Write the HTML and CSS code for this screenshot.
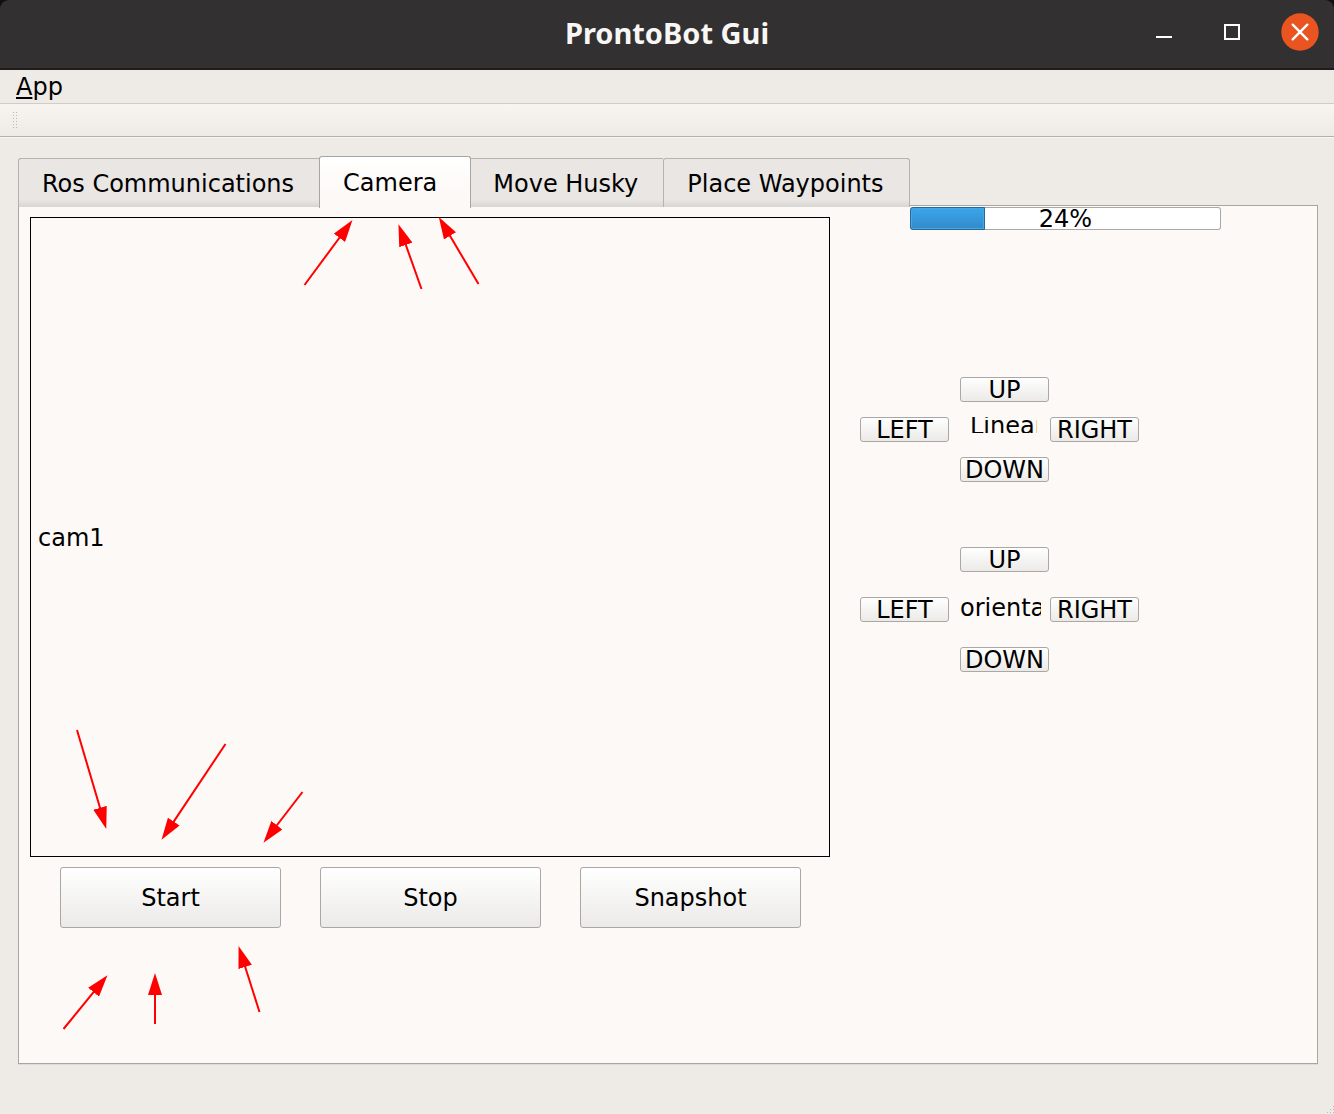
FILE: index.html
```
<!DOCTYPE html>
<html lang="en">
<head>
<meta charset="utf-8">
<title>ProntoBot Gui</title>
<link rel="stylesheet" href="styles.css">
</head>
<body>
<header class="titlebar">
  <h1 class="title">ProntoBot Gui</h1>
  <div class="window-controls">
    <button class="window-button" type="button" aria-label="Minimize"><svg width="38" height="38" viewBox="0 0 38 38"><path d="M11 24h16" stroke="#fff" stroke-width="2"/></svg></button>
    <button class="window-button" type="button" aria-label="Maximize"><svg width="38" height="38" viewBox="0 0 38 38"><rect x="12" y="12" width="14" height="14" fill="none" stroke="#fff" stroke-width="2"/></svg></button>
    <button class="window-button" type="button" aria-label="Close"><svg width="38" height="38" viewBox="0 0 38 38"><circle cx="19" cy="19" r="18.7" fill="#e95420"/><path d="M11.700 11.700l14.600 14.600M26.300 11.700L11.700 26.300" stroke="#fff" stroke-width="2.400" stroke-linecap="round"/></svg></button>
  </div>
</header>
<nav class="menubar"><button class="menu-item" type="button"><span class="mnemonic">A</span>pp</button></nav>
<div class="toolbar"><svg width="5" height="17" viewBox="0 0 5 17" aria-hidden="true"><path d="M.5 0v17M3.5 0v17" stroke="#bab7b4" stroke-dasharray="1 2"/></svg></div>
<main class="workspace">
  <div class="tabs" role="tablist">
    <button class="tab" type="button" role="tab">Ros Communications</button>
    <button class="tab tab-active" type="button" role="tab" aria-selected="true">Camera</button>
    <button class="tab" type="button" role="tab">Move Husky</button>
    <button class="tab" type="button" role="tab">Place Waypoints</button>
  </div>
  <section class="panel" role="tabpanel">
    <div class="camera">
      <div class="camera-view">cam1</div>
      <div class="camera-actions">
        <button class="push" type="button">Start</button>
        <button class="push" type="button">Stop</button>
        <button class="push" type="button">Snapshot</button>
      </div>
    </div>
    <div class="controls">
      <div class="battery">
        <progress class="battery-bar" id="battery" value="24" max="100"></progress>
        <label class="battery-text" for="battery">24%</label>
      </div>
      <div class="pad pad-linear">
        <button class="push pad-up" type="button">UP</button>
        <button class="push pad-left" type="button">LEFT</button>
        <span class="pad-label">Linear</span>
        <button class="push pad-right" type="button">RIGHT</button>
        <button class="push pad-down" type="button">DOWN</button>
      </div>
      <div class="pad pad-orientation">
        <button class="push pad-up" type="button">UP</button>
        <button class="push pad-left" type="button">LEFT</button>
        <span class="pad-label">orientation</span>
        <button class="push pad-right" type="button">RIGHT</button>
        <button class="push pad-down" type="button">DOWN</button>
      </div>
    </div>
    <svg class="arrows" width="480" height="840" viewBox="19 206 480 840" aria-hidden="true">
      <defs><marker id="head" markerUnits="userSpaceOnUse" markerWidth="22" markerHeight="14" refX="1" refY="7" orient="auto"><path d="M0 0L22 7L0 14z" fill="#f00"/></marker></defs>
      <g stroke="#f00" stroke-width="2">
        <path d="M304.500 285L340 237" marker-end="url(#head)"/>
        <path d="M421.500 289L405.500 244" marker-end="url(#head)"/>
        <path d="M478.500 284L449.500 235" marker-end="url(#head)"/>
        <path d="M77 730L100.300 808.800" marker-end="url(#head)"/>
        <path d="M225.500 744L173.200 822.400" marker-end="url(#head)"/>
        <path d="M302.500 792L276.300 826" marker-end="url(#head)"/>
        <path d="M63.500 1029L94.200 991.400" marker-end="url(#head)"/>
        <path d="M155 1024L155 994" marker-end="url(#head)"/>
        <path d="M259.500 1012L244.900 966" marker-end="url(#head)"/>
      </g>
    </svg>
  </section>
</main>
<footer class="statusbar"><svg width="8" height="8" viewBox="0 0 8 8" aria-hidden="true"><path d="M7 0h1v1h-1zM4 3h1v1h-1zM7 3h1v1h-1zM1 6h1v1h-1zM4 6h1v1h-1zM7 6h1v1h-1z" fill="#bab7b4"/></svg></footer>
</body>
</html>
```
FILE: styles.css
```
* { box-sizing: border-box; }

body {
  margin: 0;
  min-height: 100vh;
  display: flex;
  flex-direction: column;
  background: #eeebe6;
  color: #000;
  font: 24px/28px "DejaVu Sans", sans-serif;
}

button {
  margin: 0;
  padding: 0;
  border: 0;
  background: none;
  color: inherit;
  font: inherit;
}

svg { display: block; }

.titlebar {
  display: grid;
  grid-template-columns: 1fr auto 1fr;
  align-items: center;
  height: 70px;
  padding: 0 15px 4px;
  border-bottom: 2px solid #1e1c1c;
  border-radius: 9px 9px 0 0;
  background: #333031;
  box-shadow: 0 -9px 0 9px #111;
  clip-path: inset(0);
}

.title {
  grid-column: 2;
  margin: 0;
  padding-top: 2px;
  color: #f8f7f5;
  font: bold 29px/32px "Noto Sans", sans-serif;
}

.window-controls {
  display: flex;
  justify-content: flex-end;
  gap: 30px;
}

.menubar {
  height: 34px;
  padding: 3px 16px;
  border-bottom: 1px solid #d0ccca;
}

.menu-item { display: block; }

.mnemonic {
  text-decoration: underline;
  text-decoration-thickness: 2px;
  text-underline-offset: 2px;
  text-decoration-skip-ink: none;
}

.toolbar {
  display: flex;
  align-items: center;
  height: 33px;
  padding-left: 13px;
  border-bottom: 1px solid #b3afac;
  background: linear-gradient(#f8f5f1, #eeebe6);
}

.workspace {
  flex: 1;
  display: flex;
  flex-direction: column;
  padding: 18px 16px 0 18px;
  border-top: 1px solid #f8f5f2;
}

.tabs {
  display: flex;
  align-items: flex-end;
  position: relative;
  z-index: 1;
  height: 51px;
  margin-bottom: -2px;
}

.tab {
  height: 49px;
  padding: 1px 25px 0 23px;
  border: 1px solid #b5b2af;
  border-width: 1px 0 0 1px;
  border-radius: 3px 0 0 0;
  background: linear-gradient(#e9e6e3 85%, #d8d6d2);
}

.tab:last-child {
  border-right-width: 1px;
  border-radius: 3px 3px 0 0;
}

.tab-active {
  height: 52px;
  margin-bottom: -1px;
  padding: 0 33px 0 23px;
  border-color: #a9a5a3;
  border-right-width: 1px;
  border-radius: 3px 3px 0 0;
  background: linear-gradient(#fff, #fdf9f6 70%);
}

.tab-active + .tab {
  padding-left: 22px;
  border-left-width: 0;
  border-radius: 0;
}

.panel {
  flex: 1;
  display: flex;
  position: relative;
  border: 1px solid #a9a5a3;
  background: #fdf9f6;
  box-shadow: 0 1px 0 #dfdcd8;
}

.camera {
  flex: 0 1 811px;
  padding: 11px 0 0 11px;
}

.camera-view {
  display: flex;
  align-items: center;
  aspect-ratio: 5 / 4;
  padding: 2px 0 0 7px;
  border: 1px solid #000;
}

.camera-actions {
  display: flex;
  gap: 39px;
  padding: 10px 29px 0 30px;
}

.push {
  border: 1px solid #aaa7a5;
  border-radius: 3px;
  background: linear-gradient(#fff, #ebeae7);
  white-space: nowrap;
}

.camera-actions .push {
  flex: 1;
  height: 61px;
}

.controls {
  flex: 1;
  padding: 1px 0 0 30px;
}

.battery {
  position: relative;
  width: 311px;
  height: 23px;
  margin-left: 50px;
}

.battery-bar {
  display: block;
  width: 100%;
  height: 100%;
  appearance: none;
}

.battery-bar::-webkit-progress-bar {
  border-radius: 3px;
  background: #fff;
  box-shadow: inset 0 0 0 1px #aaa7a5;
}

.battery-bar::-webkit-progress-value {
  border: 1px solid #1f6a9f;
  border-radius: 3px 0 0 3px;
  background: linear-gradient(#3ba6ec, #318bc9);
  box-shadow: inset 0 0 0 1px #4ba5df;
}

.battery-text {
  position: absolute;
  inset: 0;
  line-height: 25px;
  text-align: center;
}

.pad {
  display: grid;
  grid-template-columns: 100px 90px 90px;
}

.pad .push {
  width: 89px;
  height: 25px;
  padding-top: 2px;
  line-height: 21px;
}

.pad-linear {
  grid-auto-rows: 40px;
  margin-top: 147px;
}

.pad-orientation {
  grid-auto-rows: 50px;
  margin-top: 50px;
}

.pad-up,
.pad-down { grid-column: 2; }

.pad-left { grid-column: 1; }

.pad-label {
  width: 81px;
  height: 21px;
  overflow: hidden;
  line-height: 23px;
}

.pad-linear .pad-label {
  width: 67px;
  height: 16px;
  margin-left: 10px;
  line-height: 18px;
}

.arrows {
  position: absolute;
  top: 0;
  left: 0;
  pointer-events: none;
}

.statusbar {
  display: flex;
  align-items: flex-end;
  justify-content: flex-end;
  height: 50px;
}
```
